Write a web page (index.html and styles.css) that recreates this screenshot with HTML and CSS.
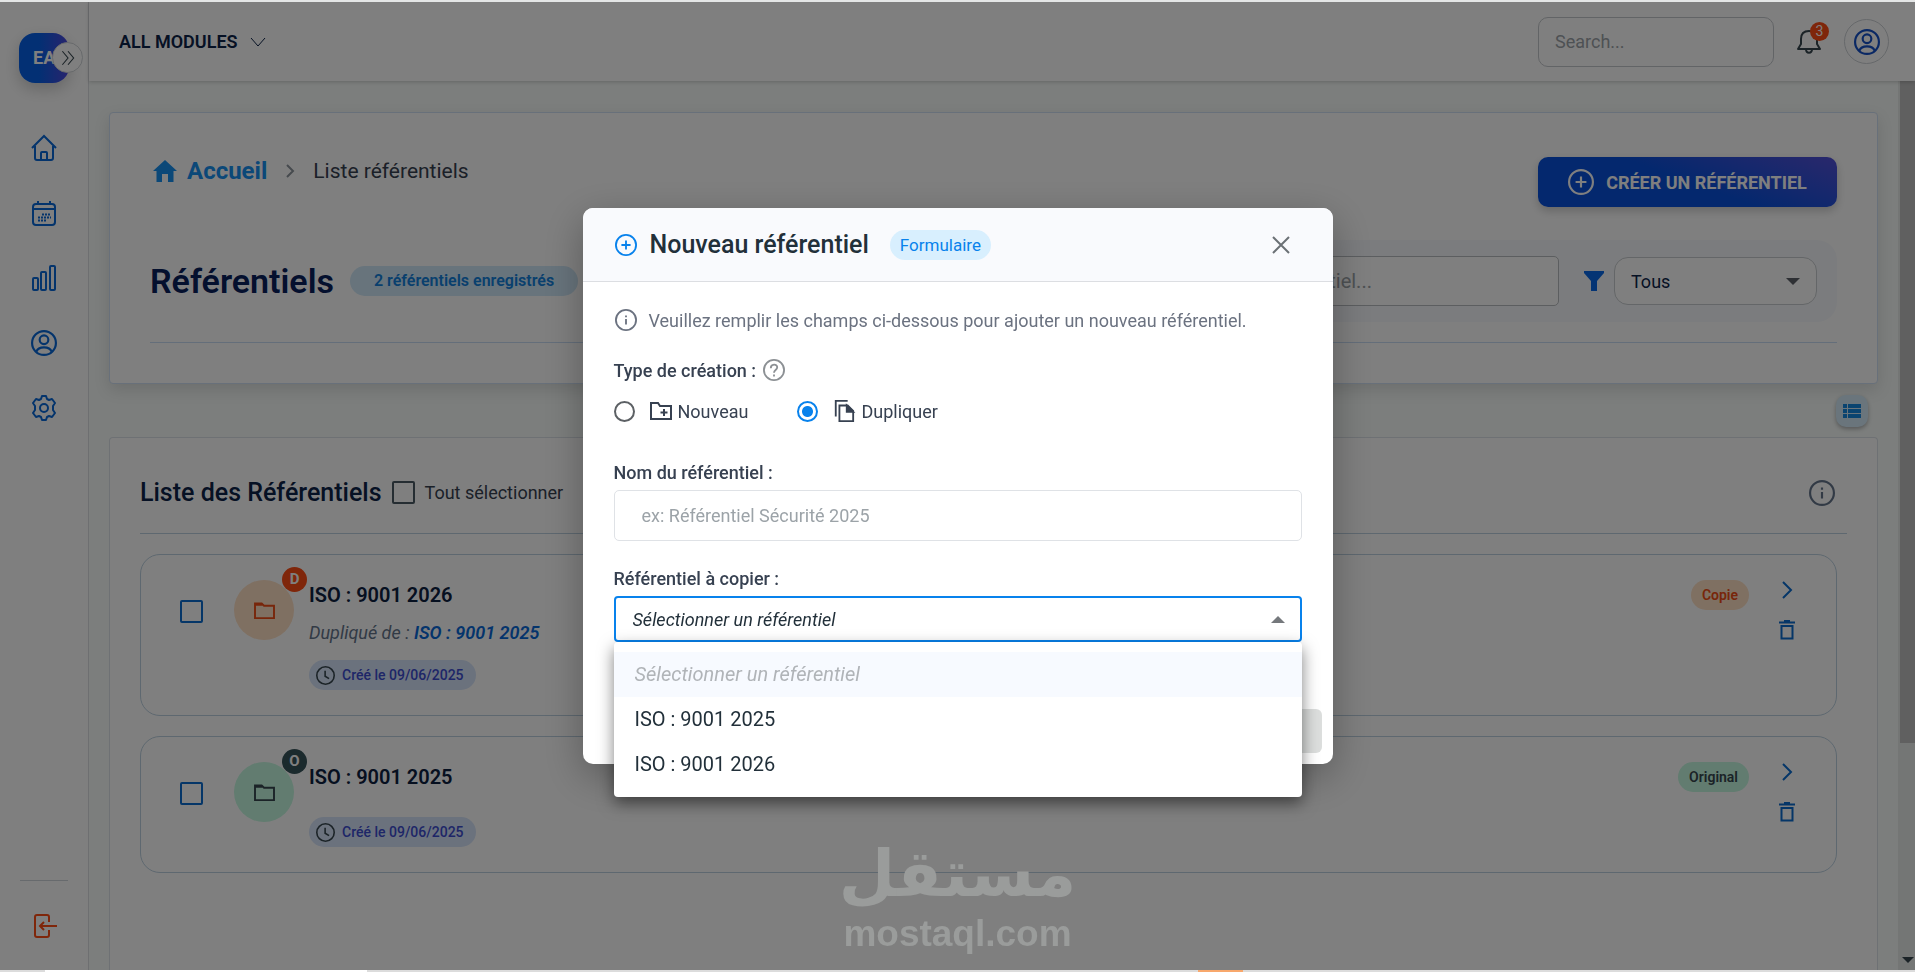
FILE: index.html
```html
<!DOCTYPE html>
<html lang="fr">
<head>
	<meta charset="utf-8">
	<title>Liste référentiels</title>
	<link rel="stylesheet" href="styles.css">
</head>
<body>
	<svg class="sprite">
		<symbol id="user" viewBox="0 0 24 24"><circle cx="12" cy="12" r="11"/><circle cx="12" cy="9" r="4"/><path d="M5 20c1-3 4-4 7-4s6 1 7 4"/></symbol>
		<symbol id="plus" viewBox="0 0 24 24"><circle cx="12" cy="12" r="11"/><path d="M12 7v10M7 12h10"/></symbol>
		<symbol id="info" viewBox="0 0 24 24"><circle cx="12" cy="12" r="11"/><path d="M12 11v6M12 7v2"/></symbol>
		<symbol id="folder" viewBox="0 0 24 20"><path d="M2 2.500h7l2.500 2.500H22v13H2z"/><path d="M2 4h8"/></symbol>
		<symbol id="clock" viewBox="0 0 24 24"><circle cx="12" cy="12" r="11"/><path d="M11.500 6v7l5 3"/></symbol>
		<symbol id="next" viewBox="0 0 12 18"><path d="M2 1l8 8-8 8"/></symbol>
		<symbol id="trash" viewBox="0 0 16 20"><path d="M0 2.500h16M5 1h6" stroke-width="2"/><path d="M2.500 6h11v12.500h-11z" stroke-width="2"/></symbol>
	</svg>

	<div class="app">
		<aside class="sidebar">
			<div class="brand">
				<div class="logo">EA</div>
				<button class="toggle" aria-label="Ouvrir le menu"><svg class="icon" viewBox="0 0 16 16"><path d="M3 2l5 6-5 6M8 2l5 6-5 6"/></svg></button>
			</div>
			<nav class="menu">
				<a href="#" aria-label="Accueil"><svg class="icon" viewBox="0 0 26 26"><path d="M1 13L13 1l12 12M4 11v12q0 2 2 2h14q2 0 2-2V11M10 25v-7q0-1 1-1h4q1 0 1 1v7"/></svg></a>
				<a href="#" aria-label="Calendrier"><svg class="icon" viewBox="0 0 26 26"><rect x="2" y="4" width="22" height="21" rx="3"/><path d="M2 9h22M7 1v3M19 1v3"/><path d="M11 14.500h9M7 17.500h13M7 20.500h9" stroke-dasharray="2 1"/></svg></a>
				<a href="#" aria-label="Statistiques"><svg class="icon" viewBox="0 0 26 26"><rect x="2" y="13" width="5" height="12" rx="1"/><rect x="10" y="7" width="5" height="18" rx="1"/><rect x="19" y="1" width="5" height="24" rx="1"/></svg></a>
				<a href="#" aria-label="Profil"><svg class="icon"><use href="#user"/></svg></a>
				<a href="#" aria-label="Paramètres"><svg class="icon" viewBox="0 0 26 26"><circle cx="13" cy="13" r="4"/><path d="M10 4l1-3h4l1 3 2 1 3-1 3 4-2 3v4l2 3-3 4-3-1-2 1-1 3h-4l-1-3-2-1-3 1-3-4 2-3v-4l-2-3 3-4 3 1z" stroke-linejoin="round"/></svg></a>
			</nav>
			<div class="logout">
				<a href="#" aria-label="Déconnexion"><svg class="icon" viewBox="0 0 26 26"><path d="M16 9V4q0-2-2-2H4Q2 2 2 4v18q0 2 2 2h10q2 0 2-2v-5M24 13H8M11 9l-4 4 4 4"/></svg></a>
			</div>
		</aside>

		<div class="main">
			<header class="topbar">
				<button class="modules">ALL MODULES <svg class="icon" viewBox="0 0 16 16"><path d="M1 4l7 8 7-8"/></svg></button>
				<input class="search" type="text" placeholder="Search..." aria-label="Search">
				<button class="bell" aria-label="Notifications">
					<svg class="icon" viewBox="0 0 26 26"><path d="M2 20h22l-3-5V10c0-5-3-8-8-8s-8 3-8 8v5zM10 20c0 5 6 5 6 0" stroke-linejoin="round"/></svg>
					<span class="count">3</span>
				</button>
				<button class="avatar" aria-label="Mon compte"><svg class="icon"><use href="#user"/></svg></button>
			</header>

			<div class="scroller">
				<div class="content">
					<section class="panel intro">
						<div class="row">
							<nav class="breadcrumb">
								<a href="#"><svg class="home" viewBox="0 0 24 22"><path d="M12 0L0 11h3.500v11H9v-8h6v8h5.500V11H24z"/></svg>Accueil</a>
								<svg class="icon sep" viewBox="0 0 8 14"><path d="M1 1l6 6-6 6"/></svg>
								<span>Liste référentiels</span>
							</nav>
							<button class="create"><svg class="icon"><use href="#plus"/></svg>CRÉER UN RÉFÉRENTIEL</button>
						</div>
						<div class="row heading">
							<h1>Référentiels</h1>
							<span class="total">2 référentiels enregistrés</span>
							<div class="filters">
								<input type="text" placeholder="Rechercher un référentiel..." aria-label="Rechercher">
								<svg class="funnel" viewBox="0 0 20 20"><path d="M0 0h20v2l-7 8v10H7V10L0 2z"/></svg>
								<div class="select">
									<select aria-label="Filtre"><option>Tous</option></select>
								</div>
							</div>
						</div>
					</section>

					<div class="view">
						<button aria-label="Vue liste"><svg viewBox="0 0 18 14"><path d="M0 0h4v4H0zM5 0h13v4H5zM0 5h4v4H0zM5 5h13v4H5zM0 10h4v4H0zM5 10h13v4H5z"/></svg></button>
					</div>

					<section class="panel list">
						<div class="list-head">
							<h2>Liste des Référentiels</h2>
							<input class="check dark" type="checkbox" id="all">
							<label for="all">Tout sélectionner</label>
							<svg class="icon help"><use href="#info"/></svg>
						</div>
						<article class="item copy">
							<input class="check" type="checkbox" aria-label="ISO : 9001 2026">
							<div class="badge"><svg class="icon"><use href="#folder"/></svg><b>D</b></div>
							<div class="details">
								<h3>ISO : 9001 2026</h3>
								<p>Dupliqué de : <b>ISO : 9001 2025</b></p>
								<span class="date"><svg class="icon"><use href="#clock"/></svg>Créé le 09/06/2025</span>
							</div>
							<span class="tag">Copie</span>
							<div class="actions">
								<button aria-label="Ouvrir"><svg class="icon go"><use href="#next"/></svg></button>
								<button aria-label="Supprimer"><svg class="icon bin"><use href="#trash"/></svg></button>
							</div>
						</article>
						<article class="item original">
							<input class="check" type="checkbox" aria-label="ISO : 9001 2025">
							<div class="badge"><svg class="icon"><use href="#folder"/></svg><b>O</b></div>
							<div class="details">
								<h3>ISO : 9001 2025</h3>
								<span class="date"><svg class="icon"><use href="#clock"/></svg>Créé le 09/06/2025</span>
							</div>
							<span class="tag">Original</span>
							<div class="actions">
								<button aria-label="Ouvrir"><svg class="icon go"><use href="#next"/></svg></button>
								<button aria-label="Supprimer"><svg class="icon bin"><use href="#trash"/></svg></button>
							</div>
						</article>
					</section>
				</div>
				<div class="scrollbar"><div class="thumb"></div><div class="arrow"></div></div>
			</div>
		</div>
	</div>
	<div class="taskbar"><span class="tab"></span><span class="mark"></span></div>

	<div class="overlay">
		<div class="modal" role="dialog" aria-labelledby="modal-title">
			<div class="modal-head">
				<svg class="icon"><use href="#plus"/></svg>
				<h2 id="modal-title">Nouveau référentiel</h2>
				<span class="chip">Formulaire</span>
				<button class="close" aria-label="Fermer"><svg class="icon" viewBox="0 0 18 18"><path d="M1 1l16 16M17 1L1 17"/></svg></button>
			</div>
			<form class="modal-body">
				<p class="hint"><svg class="icon"><use href="#info"/></svg>Veuillez remplir les champs ci-dessous pour ajouter un nouveau référentiel.</p>
				<div class="label">Type de création : <svg class="icon" viewBox="0 0 24 24"><circle cx="12" cy="12" r="11"/><path d="M8.500 10c0-5 7-5 7-1 0 3-3.500 3-3.500 6M12 17v2"/></svg></div>
				<div class="radios">
					<label><input type="radio" name="type"><svg class="icon new" viewBox="0 0 22 18"><path d="M1 1h7l2 3h11v13H1z"/><path d="M14 7v7M10.500 10.500h7"/></svg>Nouveau</label>
					<label><input type="radio" name="type" checked><svg class="icon dup" viewBox="0 0 22 24"><path d="M2 18V1h13"/><path d="M6 6h9l6 6v11H6z"/><path d="M14 6v7h7z" fill="currentColor"/></svg>Dupliquer</label>
				</div>
				<label class="label" for="name">Nom du référentiel :</label>
				<input class="field" id="name" type="text" placeholder="ex: Référentiel Sécurité 2025">
				<label class="label" for="source">Référentiel à copier :</label>
				<div class="dropdown">
					<select id="source"><option>Sélectionner un référentiel</option></select>
					<ul class="options">
						<li class="empty">Sélectionner un référentiel</li>
						<li>ISO : 9001 2025</li>
						<li>ISO : 9001 2026</li>
					</ul>
				</div>
			</form>
			<div class="modal-foot"><button class="submit" disabled aria-label="Ajouter"></button></div>
		</div>
		<div class="watermark"><span class="ar" lang="ar">مستقل</span><span>mostaql.com</span></div>
	</div>
</body>
</html>
```
FILE: styles.css
```css
* {
	box-sizing: border-box;
}

body {
	margin: 0;
	height: 100vh;
	overflow: hidden;
	display: flex;
	flex-direction: column;
	border-top: 2px solid #e4e6e6;
	font-family: Roboto, sans-serif;
	font-size: 18px;
	color: #374151;
	background: white;
}

h1, h2, h3, p, ul {
	margin: 0;
	padding: 0;
}

button, input, select {
	font: inherit;
	color: inherit;
}

button {
	background: none;
	border: none;
	padding: 0;
	display: flex;
	align-items: center;
	justify-content: center;
}

a {
	color: inherit;
	text-decoration: none;
}

.sprite {
	position: absolute;
	width: 0;
	height: 0;
}

.icon {
	width: 26px;
	height: 26px;
	flex: none;
	fill: none;
	stroke: currentColor;
	stroke-width: 2;
	overflow: visible;
}

.app {
	flex: 1;
	min-height: 0;
	display: flex;
}

/* sidebar */
.sidebar {
	width: 89px;
	flex: none;
	display: flex;
	flex-direction: column;
	border-right: 1px solid #dcdee2;
	color: #0868d8;
}

.brand {
	position: relative;
	padding: 31px 19px 0;
}

.logo {
	width: 50px;
	height: 50px;
	border-radius: 16px;
	background: linear-gradient(90deg, #0660e8 40%, #5048dc);
	box-shadow: 0 6px 16px rgba(0, 0, 0, 0.2);
	color: white;
	font-weight: 700;
	line-height: 50px;
	padding-left: 14px;
}

.toggle {
	position: absolute;
	right: 5px;
	top: 40px;
	width: 31px;
	height: 31px;
	border-radius: 50%;
	border: 1px solid #d0d4d8;
	background: white;
	color: #37474f;
}

.toggle .icon {
	width: 18px;
	height: 18px;
	stroke-width: 1;
}

.menu {
	flex: 1;
	display: flex;
	flex-direction: column;
	gap: 39px;
	padding: 52px 0 0 31px;
}

.menu a, .logout a {
	display: flex;
}

.logout {
	margin: 0 20px;
	padding: 32px 0 31px 13px;
	border-top: 1px solid #cfd4da;
	color: #ff4c14;
}

/* top bar */
.main {
	flex: 1;
	min-width: 0;
	display: flex;
	flex-direction: column;
}

.topbar {
	height: 79px;
	flex: none;
	display: flex;
	align-items: center;
	padding: 0 26px 0 30px;
	box-shadow: 0 1px 4px rgba(0, 0, 0, 0.2);
	position: relative;
}

.modules {
	margin-right: auto;
	gap: 12px;
	font-weight: 600;
	color: #0c2348;
}

.modules .icon {
	width: 16px;
	height: 16px;
	stroke-width: 1;
}

.search {
	width: 236px;
	height: 50px;
	border: 1px solid #c4c8cc;
	border-radius: 10px;
	padding: 0 16px;
	background: white;
}

::placeholder {
	color: #9ca3a8;
	opacity: 1;
}

.bell {
	position: relative;
	margin: 0 22px;
	color: #37474f;
}

.count {
	position: absolute;
	left: 14px;
	top: -7px;
	width: 19px;
	height: 19px;
	border-radius: 50%;
	background: #ff4c14;
	color: white;
	font-size: 14px;
	line-height: 19px;
}

.avatar {
	width: 45px;
	height: 45px;
	border: 1px solid #ccd0d4;
	border-radius: 50%;
	color: #1450c8;
}

/* page */
.scroller {
	flex: 1;
	min-height: 0;
	display: flex;
	background: #f8fcfa;
}

.content {
	flex: 1;
	min-width: 0;
	display: flex;
	flex-direction: column;
	padding: 31px 20px 0;
}

.scrollbar {
	width: 17px;
	display: flex;
	flex-direction: column;
	align-items: flex-end;
	justify-content: space-between;
	padding-bottom: 7px;
	background: #e9edeb;
}

.thumb {
	width: 15px;
	height: 75%;
	background: #c0c0c0;
}

.arrow {
	border: 6px solid transparent;
	border-top-color: #37474f;
	border-bottom: none;
	margin-right: 1px;
}

.panel {
	background: white;
	border: 1px solid #d0e0f4;
	border-radius: 4px;
}

.intro {
	height: 272px;
	padding: 44px 40px;
	box-shadow: 0 6px 16px rgba(0, 0, 0, 0.12);
}

.row {
	display: flex;
	align-items: center;
	justify-content: space-between;
}

.breadcrumb {
	display: flex;
	align-items: center;
	gap: 19px;
	font-size: 21px;
	margin-bottom: 22px;
	padding-left: 3px;
}

.breadcrumb a {
	display: flex;
	align-items: center;
	gap: 10px;
	font-size: 24px;
	font-weight: 700;
	color: #1690f0;
}

.home {
	width: 24px;
	height: 22px;
	fill: currentColor;
}

.icon.sep {
	width: 8px;
	height: 14px;
	color: #8c949c;
}

.create {
	width: 299px;
	height: 50px;
	border-radius: 10px;
	gap: 12px;
	font-weight: 700;
	color: white;
	background: linear-gradient(20deg, #0850dc 50%, #5450d8);
	box-shadow: 0 4px 10px rgba(0, 0, 0, 0.2);
}

.heading {
	margin-top: 33px;
	padding-bottom: 20px;
	gap: 16px;
	border-bottom: 1px solid #c8dcf4;
}

h1 {
	font-size: 34px;
	font-weight: 600;
	color: #08205c;
}

.total {
	padding: 0 24px;
	border-radius: 15px;
	font-size: 16px;
	font-weight: 600;
	line-height: 30px;
	color: #1280dc;
	background: #d0e8f8;
}

.filters {
	margin-left: auto;
	display: flex;
	align-items: center;
	height: 82px;
	padding: 0 20px;
	border-radius: 20px;
	background: #f7f9fc;
}

.filters input {
	width: 440px;
	height: 50px;
	font-size: 20px;
	border: 1px solid #b8bcc0;
	border-radius: 5px;
	padding: 0 14px;
	background: white;
}

.funnel {
	width: 20px;
	height: 20px;
	margin: 0 10px 0 25px;
	fill: #0868e8;
}

.select, .dropdown {
	position: relative;
}

.select select {
	display: block;
	appearance: none;
	width: 203px;
	height: 48px;
	border: 1px solid #c8ccd0;
	border-radius: 14px;
	padding: 0 16px;
	color: #0c2348;
	background: white;
}

.select::after {
	content: "";
	position: absolute;
	right: 17px;
	top: 21px;
	border: 7px solid transparent;
	border-top-color: #5c6068;
	border-bottom: none;
}

.view {
	display: flex;
	justify-content: flex-end;
	padding: 11px 10px 10px;
}

.view button {
	width: 32px;
	height: 32px;
	border-radius: 10px;
	background: #d4ebf8;
	box-shadow: 0 2px 4px rgba(0, 0, 0, 0.3);
}

.view svg {
	width: 18px;
	height: 14px;
	fill: #1488e0;
}

.list {
	flex: 1;
	border-bottom: none;
	border-radius: 4px 4px 0 0;
	border-color: #dce2e8;
	padding: 34px 30px 0;
}

.list-head {
	display: flex;
	align-items: center;
	gap: 10px;
	height: 62px;
	padding: 0 12px 20px 0;
	border-bottom: 1px solid #bcd0e0;
}

.list-head h2 {
	font-size: 25px;
	font-weight: 500;
	color: #0c2348;
}

.list-head .help {
	margin-left: auto;
	color: #64748b;
}

.check {
	appearance: none;
	flex: none;
	width: 23px;
	height: 23px;
	margin: 0;
	border: 2px solid #0a6cd0;
	border-radius: 2px;
}

.check.dark {
	border-color: #4b5b64;
}

.item {
	display: flex;
	margin: 20px 10px 0 0;
	padding: 25px 41px 25px 39px;
	border: 1px solid #bcd0e0;
	border-radius: 20px;
}

.item .check {
	margin: 20px 31px 0 0;
}

.badge {
	position: relative;
	width: 60px;
	height: 60px;
	margin-right: 15px;
	border-radius: 50%;
	display: flex;
	align-items: center;
	justify-content: center;
}

.badge .icon {
	width: 23px;
	height: 19px;
}

.badge b {
	position: absolute;
	right: -13px;
	top: -13px;
	width: 25px;
	height: 25px;
	border-radius: 50%;
	font-size: 15px;
	line-height: 25px;
	text-align: center;
	color: white;
}

.copy .badge, .copy .tag {
	background: #ffe0c4;
	color: #f04c14;
}

.copy .badge b {
	background: #ff4c14;
}

.original .badge, .original .tag {
	background: #c4f8e0;
	color: #37474f;
}

.original .badge b {
	background: #37545a;
}

.details {
	flex: 1;
	display: flex;
	flex-direction: column;
	align-items: flex-start;
}

h3 {
	font-size: 20px;
	font-weight: 600;
	line-height: 30px;
	color: #0c2040;
}

.details p {
	margin: 9px 0 -11px;
	font-style: italic;
	line-height: 27px;
	color: #64748b;
}

.details p b {
	font-weight: 600;
	color: #0868d8;
}

.date {
	display: flex;
	align-items: center;
	gap: 7px;
	height: 30px;
	margin-top: 25px;
	padding: 0 12px 0 7px;
	border-radius: 15px;
	font-size: 14px;
	font-weight: 500;
	color: #3c4cd0;
	background: #d6e4fa;
}

.date .icon {
	width: 19px;
	height: 19px;
	color: #37474f;
}

.tag {
	align-self: flex-start;
	padding: 0 11px;
	border-radius: 15px;
	font-size: 14px;
	font-weight: 600;
	line-height: 30px;
}

.actions {
	display: flex;
	flex-direction: column;
	align-items: center;
	gap: 21px;
	width: 16px;
	margin-left: 30px;
	padding-top: 1px;
	color: #0a6cd0;
}

.icon.go {
	width: 12px;
	height: 18px;
}

.icon.bin {
	width: 16px;
	height: 20px;
}

.taskbar {
	height: 2px;
	flex: none;
	display: flex;
	justify-content: space-between;
	padding: 0 672px 0 45px;
	background: #dcdcdc;
}

.tab {
	width: 322px;
	background: white;
}

.mark {
	width: 45px;
	background: #f8a86c;
}

/* modal */
.overlay {
	position: fixed;
	inset: 2px 0;
	display: flex;
	align-items: center;
	justify-content: center;
	background: rgba(0, 0, 0, 0.5);
}

.modal {
	width: 750px;
	border-radius: 10px;
	background: white;
	box-shadow: 0 12px 40px rgba(0, 0, 0, 0.3);
}

.modal-head {
	display: flex;
	align-items: center;
	height: 74px;
	padding: 0 43px 0 32px;
	border-bottom: 1px solid #dcdee2;
	border-radius: 10px 10px 0 0;
	background: #f9fafd;
}

.modal .icon {
	width: 22px;
	height: 22px;
}

.modal-head .icon {
	color: #0882ec;
}

.modal-head h2 {
	margin: 0 21px 0 13px;
	font-size: 25px;
	font-weight: 500;
	color: #22303a;
}

.chip {
	padding: 0 10px;
	border-radius: 15px;
	font-size: 17px;
	line-height: 30px;
	color: #0882ec;
	background: #d8effe;
}

.modal .close {
	margin-left: auto;
}

.modal .close .icon {
	width: 18px;
	height: 18px;
	color: #6b7075;
}

.modal-body {
	padding: 24px 31px 0;
}

.hint {
	display: flex;
	align-items: center;
	gap: 12px;
	height: 28px;
	padding-left: 1px;
	color: #6b7280;
}

.label {
	display: flex;
	align-items: center;
	gap: 7px;
	height: 24px;
	font-weight: 500;
}

.hint + .label {
	margin-top: 24px;
}

.label .icon {
	color: #8c9094;
}

.radios {
	display: flex;
	gap: 49px;
	margin: 15px 0 35px;
}

.radios label {
	display: flex;
	align-items: center;
	height: 28px;
}

.radios input {
	appearance: none;
	width: 21px;
	height: 21px;
	margin: 0 15px 0 0;
	border: 2px solid #5c6064;
	border-radius: 50%;
}

.radios input:checked {
	border-color: #0882ec;
	background: radial-gradient(#0882ec 5px, white 6px);
}

.radios .icon {
	margin-right: 6px;
}

.radios .new {
	height: 18px;
}

.field {
	display: block;
	width: 100%;
	height: 51px;
	margin: 6px 0 25px;
	padding: 0 27px;
	border: 1px solid #dfe2e6;
	border-radius: 5px;
}

.dropdown {
	margin-top: 6px;
}

.dropdown select {
	display: block;
	appearance: none;
	width: 100%;
	height: 46px;
	padding: 0 17px;
	border: 2px solid #0882ec;
	border-radius: 4px;
	font-style: italic;
	color: #22303a;
	background: white;
}

.dropdown::after {
	content: "";
	position: absolute;
	right: 17px;
	top: 20px;
	border: 7px solid transparent;
	border-bottom-color: #75787c;
	border-top: none;
}

.options {
	position: absolute;
	z-index: 1;
	top: 100%;
	left: 0;
	right: 0;
	padding: 10px 0;
	list-style: none;
	font-size: 20px;
	line-height: 45px;
	color: #22303a;
	background: white;
	border-radius: 4px;
	box-shadow: 0 6px 16px rgba(0, 0, 0, 0.5);
}

.options li {
	padding: 0 21px;
}

.options .empty {
	font-style: italic;
	color: #b0b4b8;
	background: #f7faff;
}

.modal-foot {
	display: flex;
	justify-content: flex-end;
	padding: 67px 11px 11px;
}

.submit {
	width: 120px;
	height: 44px;
	border-radius: 6px;
	background: #dcdedd;
}

.watermark {
	position: absolute;
	bottom: 14px;
	left: 0;
	right: 0;
	display: flex;
	flex-direction: column;
	align-items: center;
	font-family: "Liberation Sans", sans-serif;
	font-size: 37px;
	font-weight: 700;
	line-height: 44px;
	color: #9a9c9b;
}

.ar {
	font-family: "DejaVu Sans", sans-serif;
	font-size: 65px;
	line-height: 76px;
}
```
